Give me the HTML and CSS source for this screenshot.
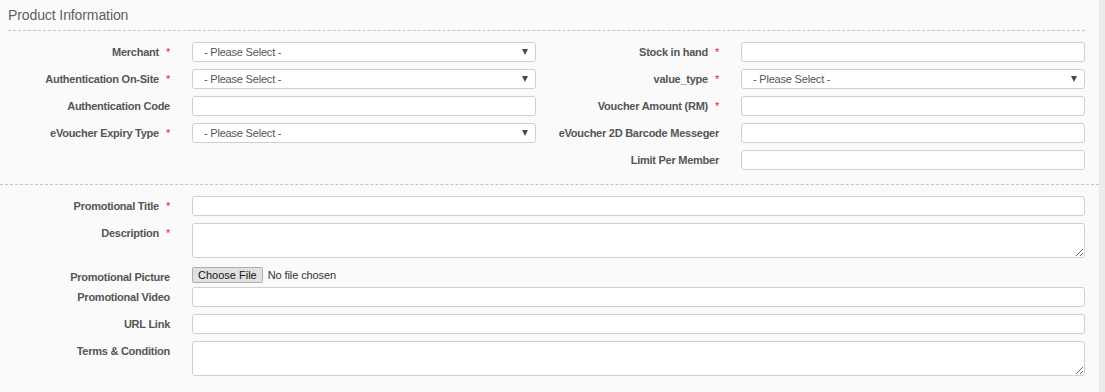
FILE: index.html
```html
<!DOCTYPE html>
<html>
    <head>
        <title>Product Information</title>
        <link rel="stylesheet" href="styles.css">
    </head>
    <body>
        <div class="panel">

            <div class="panelTitle">Product Information</div>

            <!-- top part, two columns -->
            <div class="formTop">
                <div class="formCol">
                    <div class="formRow">
                        <label class="fieldLabel">Merchant<span class="req">*</span></label>
                        <div class="selectWrap">
                            <select class="field"><option>- Please Select -</option></select>
                        </div>
                    </div>
                    <div class="formRow">
                        <label class="fieldLabel">Authentication On-Site<span class="req">*</span></label>
                        <div class="selectWrap">
                            <select class="field"><option>- Please Select -</option></select>
                        </div>
                    </div>
                    <div class="formRow">
                        <label class="fieldLabel">Authentication Code</label>
                        <input type="text" class="field">
                    </div>
                    <div class="formRow">
                        <label class="fieldLabel">eVoucher Expiry Type<span class="req">*</span></label>
                        <div class="selectWrap">
                            <select class="field"><option>- Please Select -</option></select>
                        </div>
                    </div>
                </div>

                <div class="formCol">
                    <div class="formRow">
                        <label class="fieldLabel">Stock in hand<span class="req">*</span></label>
                        <input type="text" class="field">
                    </div>
                    <div class="formRow">
                        <label class="fieldLabel">value_type<span class="req">*</span></label>
                        <div class="selectWrap">
                            <select class="field"><option>- Please Select -</option></select>
                        </div>
                    </div>
                    <div class="formRow">
                        <label class="fieldLabel">Voucher Amount (RM)<span class="req">*</span></label>
                        <input type="text" class="field">
                    </div>
                    <div class="formRow">
                        <label class="fieldLabel">eVoucher 2D Barcode Messeger</label>
                        <input type="text" class="field">
                    </div>
                    <div class="formRow">
                        <label class="fieldLabel">Limit Per Member</label>
                        <input type="text" class="field">
                    </div>
                </div>
            </div>

            <!-- bottom part, full width fields -->
            <div class="formBottom">
                <div class="formRow">
                    <label class="fieldLabel">Promotional Title<span class="req">*</span></label>
                    <input type="text" class="field wide">
                </div>
                <div class="formRow topAlign">
                    <label class="fieldLabel">Description<span class="req">*</span></label>
                    <textarea class="field wide area"></textarea>
                </div>
                <div class="formRow fileRow">
                    <label class="fieldLabel">Promotional Picture</label>
                    <input type="file" class="fileInput">
                </div>
                <div class="formRow">
                    <label class="fieldLabel">Promotional Video</label>
                    <input type="text" class="field wide">
                </div>
                <div class="formRow">
                    <label class="fieldLabel">URL Link</label>
                    <input type="text" class="field wide">
                </div>
                <div class="formRow topAlign">
                    <label class="fieldLabel">Terms &amp; Condition</label>
                    <textarea class="field wide area"></textarea>
                </div>
            </div>

        </div>
    </body>
</html>
```

FILE: styles.css
```css
body {
    margin: 0;
    background-color: #ebebeb;
    font-family: "Liberation Sans", Arial, sans-serif;
    color: #555;
}

.panel {
    width: 1099px;
    min-height: 392px;
    background-color: #fafafa;
}

/* Title with dashed rule under it */
.panelTitle {
    margin: 0 14px 0 8px;
    padding: 5px 0 5px 0;
    height: 20px;
    line-height: 20px;
    font-size: 14px;
    letter-spacing: -0.1px;
    color: #5a5f66;
    border-bottom: 1px dashed #c4c4c4;
}

.formTop {
    display: flex;
    padding: 11px 0 14px 0;
    border-bottom: 1px dashed #c4c4c4;
}

.formCol {
    width: 549px;
    display: flex;
    flex-direction: column;
    gap: 7px;
}

.formBottom {
    display: flex;
    flex-direction: column;
    gap: 7px;
    padding-top: 11px;
}

.formRow {
    display: flex;
    align-items: center;
    gap: 22px;
}

.formRow.topAlign {
    align-items: flex-start;
}

.formRow.topAlign .fieldLabel {
    padding-top: 4px;
}

.fieldLabel {
    width: 170px;
    flex-shrink: 0;
    text-align: right;
    font-size: 11px;
    font-weight: bold;
    letter-spacing: -0.25px;
    color: #555;
    white-space: nowrap;
}

.req {
    color: #f0141e;
    font-weight: normal;
    margin-left: 7px;
}

.field {
    box-sizing: border-box;
    width: 344px;
    height: 20px;
    margin: 0;
    padding: 0 11px;
    border: 1px solid #cfcfcf;
    border-radius: 3px;
    background-color: #fff;
    font-family: "Liberation Sans", Arial, sans-serif;
    font-size: 11px;
    letter-spacing: -0.2px;
    color: #555;
    outline: none;
}

.field.wide {
    width: 893px;
}

.field.area {
    height: 35px;
    resize: vertical;
}

select.field {
    appearance: none;
    -webkit-appearance: none;
}

.selectWrap {
    position: relative;
    width: 344px;
    height: 20px;
}

/* small dark arrow on the right of the select */
.selectWrap::after {
    content: "";
    position: absolute;
    right: 8px;
    top: 7px;
    border-left: 3.5px solid transparent;
    border-right: 3.5px solid transparent;
    border-top: 6px solid #4a4a4a;
    pointer-events: none;
}

.fileRow {
    height: 15px;
    align-items: flex-start;
}

.fileRow .fieldLabel {
    padding-top: 6px;
}

.fileInput {
    height: 16px;
    margin-top: 2px;
    font-family: "Liberation Sans", Arial, sans-serif;
    font-size: 11px;
    letter-spacing: -0.1px;
    color: #333;
}

.fileInput::file-selector-button {
    height: 16px;
    margin: 0 5px 0 0;
    padding: 0 5px;
    border: 1px solid #adadad;
    border-radius: 2px;
    background-color: #e1e1e1;
    font-family: "Liberation Sans", Arial, sans-serif;
    font-size: 11px;
    color: #111;
}
```
